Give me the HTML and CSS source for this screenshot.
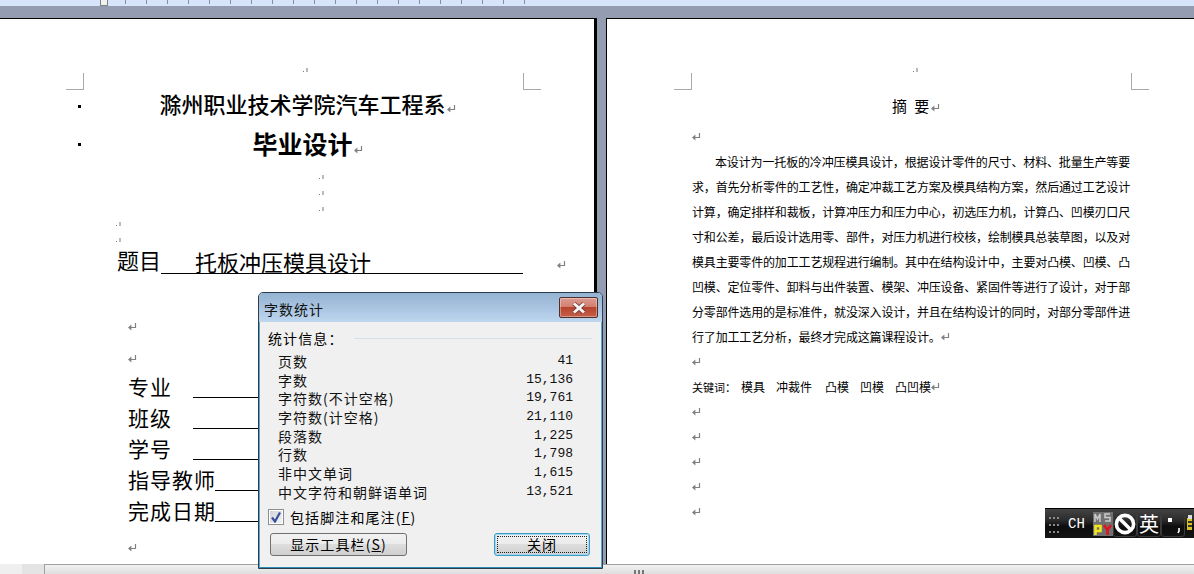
FILE: index.html
```html
<!DOCTYPE html>
<html lang="zh-CN">
<head>
  <meta charset="UTF-8" />
  <title>字数统计</title>
  <link rel="stylesheet" href="styles.css">
</head>
<body>

  <!-- paragraph marks, reused everywhere -->
  <svg class="defs" width="0" height="0">
    <symbol id="pm" viewBox="0 0 9 8"><path d="M7.5 0v4.5H2" fill="none" stroke="#808080" stroke-width="1.2"/><path d="M0 4.5l3.4-3v6z" fill="#808080"/></symbol>
    <symbol id="pm-tiny" viewBox="0 0 5 5"><rect x="0" y="3" width="1" height="1" fill="#777"/><rect x="3.5" y="0" width="1" height="4" fill="#777"/></symbol>
  </svg>

  <!-- Ruler -->
  <div class="ruler">
    <div class="ruler-handle"></div>
    <div class="ruler-ticks"></div>
  </div>

  <!-- Two pages side by side -->
  <div class="workspace">

    <div class="page page-left">
      <i class="crop crop-tl"></i>
      <i class="crop crop-tr"></i>

      <div class="mark-row top-mark"><svg class="pm-tiny"><use href="#pm-tiny"/></svg></div>

      <div class="cover-title">
        <i class="bullet"></i>
        <div class="cover-text school">滁州职业技术学院汽车工程系<svg class="pm"><use href="#pm"/></svg></div>
      </div>
      <div class="cover-title second">
        <i class="bullet"></i>
        <div class="cover-text degree">毕业设计<svg class="pm"><use href="#pm"/></svg></div>
      </div>

      <div class="blank-group center-group">
        <div class="blank"><svg class="pm-tiny"><use href="#pm-tiny"/></svg></div>
        <div class="blank"><svg class="pm-tiny"><use href="#pm-tiny"/></svg></div>
        <div class="blank"><svg class="pm-tiny"><use href="#pm-tiny"/></svg></div>
      </div>
      <div class="blank-group left-group">
        <div class="blank"><svg class="pm-tiny"><use href="#pm-tiny"/></svg></div>
        <div class="blank"><svg class="pm-tiny"><use href="#pm-tiny"/></svg></div>
      </div>

      <div class="topic">
        <span class="topic-label">题目</span>
        <span class="topic-value">托板冲压模具设计</span>
        <svg class="pm"><use href="#pm"/></svg>
      </div>

      <div class="info-mark first"><svg class="pm"><use href="#pm"/></svg></div>
      <div class="info-mark"><svg class="pm"><use href="#pm"/></svg></div>

      <div class="info-row"><span class="info-label">专业</span><span class="info-line"></span></div>
      <div class="info-row"><span class="info-label">班级</span><span class="info-line"></span></div>
      <div class="info-row"><span class="info-label">学号</span><span class="info-line"></span></div>
      <div class="info-row"><span class="info-label wide">指导教师</span><span class="info-line"></span></div>
      <div class="info-row"><span class="info-label wide">完成日期</span><span class="info-line"></span></div>

      <div class="info-mark last"><svg class="pm"><use href="#pm"/></svg></div>
    </div>

    <div class="page page-right">
      <i class="crop crop-tl"></i>
      <i class="crop crop-tr"></i>

      <div class="mark-row top-mark"><svg class="pm-tiny"><use href="#pm-tiny"/></svg></div>

      <div class="abstract-title">摘&nbsp;要<svg class="pm"><use href="#pm"/></svg></div>
      <div class="doc-line"><svg class="pm"><use href="#pm"/></svg></div>

      <div class="body-line indent">本设计为一托板的冷冲压模具设计，根据设计零件的尺寸、材料、批量生产等要</div>
      <div class="body-line">求，首先分析零件的工艺性，确定冲裁工艺方案及模具结构方案，然后通过工艺设计</div>
      <div class="body-line">计算，确定排样和裁板，计算冲压力和压力中心，初选压力机，计算凸、凹模刃口尺</div>
      <div class="body-line">寸和公差，最后设计选用零、部件，对压力机进行校核，绘制模具总装草图，以及对</div>
      <div class="body-line">模具主要零件的加工工艺规程进行编制。其中在结构设计中，主要对凸模、凹模、凸</div>
      <div class="body-line">凹模、定位零件、卸料与出件装置、模架、冲压设备、紧固件等进行了设计，对于部</div>
      <div class="body-line">分零部件选用的是标准件，就没深入设计，并且在结构设计的同时，对部分零部件进</div>
      <div class="doc-line last-line">行了加工工艺分析，最终才完成这篇课程设计。<svg class="pm"><use href="#pm"/></svg></div>

      <div class="doc-line"><svg class="pm"><use href="#pm"/></svg></div>
      <div class="doc-line keywords">
        <span class="kw-label">关键词：</span><span class="kw kw-1">模具</span><span class="kw kw-2">冲裁件</span><span class="kw kw-3">凸模</span><span class="kw kw-3">凹模</span><span class="kw">凸凹模</span><svg class="pm"><use href="#pm"/></svg>
      </div>
      <div class="doc-line"><svg class="pm"><use href="#pm"/></svg></div>
      <div class="doc-line"><svg class="pm"><use href="#pm"/></svg></div>
      <div class="doc-line"><svg class="pm"><use href="#pm"/></svg></div>
      <div class="doc-line"><svg class="pm"><use href="#pm"/></svg></div>
      <div class="doc-line"><svg class="pm"><use href="#pm"/></svg></div>
    </div>
  </div>

  <!-- Bottom scrollbar -->
  <div class="scrollbar">
    <div class="sb-view">
      <svg width="10" height="8" viewBox="0 0 10 8"><rect x="0.5" y="0.5" width="9" height="7" fill="#f4f4f4" stroke="#555"/><path d="M2 2l6 4M8 2l-6 4" stroke="#444"/></svg>
    </div>
    <div class="sb-arrow">
      <svg width="6" height="6" viewBox="0 0 6 6"><path d="M6 0v6H0z" fill="#444"/></svg>
    </div>
    <div class="sb-track"><i class="grip"></i><i class="grip"></i><i class="grip"></i></div>
  </div>

  <!-- Word count dialog -->
  <div class="dialog">
    <div class="dialog-title">
      <span>字数统计</span>
      <div class="close-btn">
        <svg width="16" height="12" viewBox="0 0 16 12"><path d="M3 1.5l10 9M13 1.5l-10 9" stroke="#6d3a36" stroke-width="4.4"/><path d="M3 1.5l10 9M13 1.5l-10 9" stroke="#f6f3f3" stroke-width="3"/></svg>
      </div>
    </div>
    <div class="dialog-body">
      <div class="group-head"><span>统计信息：</span><i class="group-rule"></i></div>
      <ul class="stats">
        <li><span>页数</span><b>41</b></li>
        <li><span>字数</span><b>15,136</b></li>
        <li><span>字符数(不计空格)</span><b>19,761</b></li>
        <li><span>字符数(计空格)</span><b>21,110</b></li>
        <li><span>段落数</span><b>1,225</b></li>
        <li><span>行数</span><b>1,798</b></li>
        <li><span>非中文单词</span><b>1,615</b></li>
        <li><span>中文字符和朝鲜语单词</span><b>13,521</b></li>
      </ul>
      <div class="check-row">
        <span class="checkbox">
          <svg width="12" height="12" viewBox="0 0 12 12"><path d="M2 6.5l3 4 5-9" fill="none" stroke="#3a4f9a" stroke-width="2.2"/></svg>
        </span>
        <span>包括脚注和尾注(<u>F</u>)</span>
      </div>
      <div class="btn-row">
        <div class="btn">显示工具栏(<u>S</u>)</div>
        <div class="btn btn-default"><span class="focus-box">关闭</span></div>
      </div>
    </div>
  </div>

  <!-- Floating IME bar -->
  <div class="ime-bar">
    <div class="ime-grip">
      <svg width="11" height="17" viewBox="0 0 11 17"><path d="M0 1h11M0 8h11M0 15h11" stroke="#8a8a8a" stroke-width="2" stroke-dasharray="2 2"/></svg>
    </div>
    <span class="ime-lang">CH</span>
    <div class="ime-py">
      <svg width="20" height="24" viewBox="0 0 20 24"><rect width="20" height="24" fill="#707070"/><path d="M2 10V2l2.500 5L7 2v8M17 2h-5v3.500h5V9h-5" fill="none" stroke="#ccc" stroke-width="1.5"/><path d="M2.500 23v-9h5v5h-5" fill="none" stroke="#f2e51c" stroke-width="2.6"/><path d="M11 13l3.500 5 3.500-5M14.500 18v5" fill="none" stroke="#e0141c" stroke-width="2.6"/></svg>
    </div>
    <div class="ime-key">
      <svg width="22" height="22" viewBox="0 0 22 22"><circle cx="11" cy="11" r="8.6" fill="none" stroke="#fff" stroke-width="3.6"/><path d="M6 6l10 10" stroke="#fff" stroke-width="3.6"/></svg>
    </div>
    <div class="ime-key ime-char">英</div>
    <div class="ime-key ime-punct">
      <svg width="22" height="22" viewBox="0 0 22 22"><rect x="6" y="5" width="4" height="4" fill="#fff"/><path d="M17 15v3l-1 2" fill="none" stroke="#fff" stroke-width="1.6"/></svg>
    </div>
    <div class="ime-end">
      <svg width="5" height="22" viewBox="0 0 5 22"><rect y="5" width="5" height="12" fill="#d9c41e"/><rect x="1" y="2" width="4" height="4" fill="#ddd"/><rect x="1" y="8" width="4" height="2" fill="#333"/><rect x="1" y="12" width="4" height="2" fill="#333"/></svg>
    </div>
  </div>

</body>
</html>
```

FILE: styles.css
```css
* {
  box-sizing: border-box;
  margin: 0;
  padding: 0;
}

html, body {
  width: 1194px;
  height: 574px;
  overflow: hidden;
}

body {
  position: relative;
  display: flex;
  flex-direction: column;
  background: #939cb0;
  font-family: "Noto Sans CJK SC", "Liberation Sans", sans-serif;
  color: #000;
}

.defs {
  position: absolute;
}

/* ruler */
.ruler {
  height: 6px;
  display: flex;
  padding-left: 100px;
  background: #d6e5fb;
}

.ruler-handle {
  width: 8px;
  height: 6px;
  background: #f2f2f2;
  border: 1px solid #7f7f7f;
  border-top: none;
}

.ruler-ticks {
  width: 400px;
  height: 4px;
  margin-left: 17px;
  background: repeating-linear-gradient(to right, #8a8f99 0, #8a8f99 1px, transparent 1px, transparent 21px);
}

/* pages */
.workspace {
  flex: 1;
  display: flex;
  padding-top: 12px;
  min-height: 0;
}

.page {
  position: relative;
  height: 546px;
  background: #fff;
  border-top: 1px solid #000;
}

.page-left {
  width: 597px;
  border-right: 3px solid #000;
}

.page-right {
  width: 588px;
  flex: none;
  margin-left: 9px;
  border-left: 1px solid #000;
  padding-left: 85px;
}

.crop {
  position: absolute;
  top: 54px;
  width: 18px;
  height: 17px;
  border-bottom: 1px solid #a8a8a8;
}

.crop-tl { border-right: 1px solid #a8a8a8; }
.crop-tr { border-left: 1px solid #a8a8a8; }

.page-left .crop-tl { left: 66px; }
.page-left .crop-tr { left: 523px; }
.page-right .crop-tl { left: 67px; }
.page-right .crop-tr { left: 524px; }

/* paragraph marks */
.pm {
  display: inline-block;
  width: 9px;
  height: 8px;
  margin-left: 1px;
  vertical-align: 0;
}

.pm-tiny {
  display: block;
  width: 5px;
  height: 5px;
}

.top-mark {
  height: 5px;
  margin-top: 49px;
}

.page-left .top-mark { padding-left: 303px; }
.page-right .top-mark { padding-left: 221px; }

/* cover */
.cover-title {
  display: flex;
  align-items: center;
  height: 38px;
  margin-top: 14px;
  padding: 0 60px 0 78px;
}

.cover-title.second {
  margin-top: 0;
}

.bullet {
  width: 3px;
  height: 3px;
  background: #000;
}

.cover-text {
  flex: 1;
  text-align: center;
  white-space: nowrap;
}

.school {
  padding-bottom: 5px;
  font-size: 22px;
  font-weight: 500;
  line-height: 33px;
}

.degree {
  padding-bottom: 2px;
  font-size: 25px;
  font-weight: 700;
  line-height: 34px;
}

.blank-group .blank {
  height: 16px;
  padding-top: 5px;
}

.center-group {
  margin-top: 7px;
  padding-left: 319px;
}

.left-group {
  padding-left: 116px;
  margin-top: -1px;
}

.topic {
  display: flex;
  align-items: flex-end;
  height: 32px;
  margin-top: -7px;
  padding-left: 117px;
  font-size: 22px;
  line-height: 30px;
}

.topic-label {
  width: 44px;
}

.topic-value {
  width: 362px;
  height: 28px;
  line-height: 30px;
  padding-left: 34px;
  border-bottom: 1px solid #000;
}

.topic .pm {
  margin: 0 0 5px 34px;
}

.info-mark {
  height: 32px;
  padding: 12px 0 0 127px;
  line-height: 8px;
}

.info-mark.first {
  margin-top: 34px;
}

.info-mark.last {
  margin-top: 2px;
}

.info-row {
  display: flex;
  height: 31px;
  padding-left: 128px;
  font-size: 21px;
  line-height: 28px;
}

.info-label {
  width: 65px;
  letter-spacing: 1px;
  white-space: nowrap;
}

.info-label.wide {
  width: 87px;
}

.info-line {
  width: 70px;
  height: 26px;
  border-bottom: 1px solid #000;
}

/* abstract page */
.abstract-title {
  width: 450px;
  padding-left: 200px;
  margin-top: 20px;
  height: 25px;
  line-height: 25px;
  font-size: 15px;
  letter-spacing: 2px;
  white-space: nowrap;
}

.abstract-title .pm {
  margin-left: 0;
}

.doc-line {
  height: 25px;
  line-height: 25px;
  font-size: 12px;
  white-space: nowrap;
}

.doc-line .pm {
  margin-left: 0;
  vertical-align: 1px;
}

.abstract-title + .doc-line {
  margin-top: 6px;
}

.body-line {
  width: 438px;
  height: 25px;
  line-height: 25px;
  font-size: 12px;
  letter-spacing: -0.17px;
  white-space: nowrap;
  text-align: justify;
  text-align-last: justify;
}

.body-line.indent {
  margin-left: 23px;
  width: 415px;
}

.last-line {
  letter-spacing: -0.16px;
}

.kw-label { font-size: 11px; margin-right: 5px; }
.kw { display: inline-block; }
.kw-1 { width: 35px; }
.kw-2 { width: 49px; }
.kw-3 { width: 35px; }

/* bottom scrollbar */
.scrollbar {
  height: 10px;
  display: flex;
  background: #e6e6e6;
  position: absolute;
  left: 0;
  top: 564px;
  width: 1194px;
}

.sb-view {
  width: 22px;
  padding: 3px 0 0 6px;
  background: #efefef;
}

.sb-arrow {
  width: 22px;
  padding: 3px 0 0 7px;
  background: #e4e4e4;
}

.sb-track {
  flex: 1;
  display: flex;
  gap: 2px;
  padding: 5px 0 0 589px;
  border-top: 1px solid #a0a0a0;
  border-left: 1px solid #a0a0a0;
  background: linear-gradient(#f2f2f2, #dedede);
}

.grip {
  width: 2px;
  height: 5px;
  background: #777;
}

/* dialog */
.dialog {
  position: absolute;
  left: 258px;
  top: 292px;
  width: 345px;
  height: 277px;
  border: 1px solid #2d3d4d;
  border-radius: 5px 5px 0 0;
  background: #f0f0f0;
  font-size: 14px;
  overflow: hidden;
}

.dialog-title {
  height: 29px;
  display: flex;
  justify-content: space-between;
  padding: 4px 4px 0 5px;
  background: linear-gradient(#94b2d2, #bed6ef);
  line-height: 24px;
  color: #111;
  letter-spacing: 1px;
}

.close-btn {
  width: 39px;
  height: 21px;
  display: flex;
  align-items: center;
  justify-content: center;
  border: 1px solid #4d2f2c;
  border-radius: 2px;
  background: linear-gradient(#dc9b90 0, #d2806f 45%, #b8432d 50%, #c4604a 100%);
  box-shadow: inset 0 0 0 1px rgba(255, 255, 255, 0.35);
}

.dialog-body {
  height: 247px;
  padding: 6px 9px 0 8px;
  border-left: 1px solid #5aa5c8;
  border-right: 1px solid #5aa5c8;
  border-bottom: 2px solid #2c8cb3;
}

.group-head {
  display: flex;
  align-items: center;
  height: 20px;
  letter-spacing: 1.1px;
}

.group-rule {
  flex: 1;
  height: 1px;
  margin-left: 10px;
  background: #d5dfe7;
}

.stats {
  list-style: none;
  margin-top: 4px;
  padding: 0 19px 0 10px;
}

.stats li {
  display: flex;
  justify-content: space-between;
  height: 18.7px;
  line-height: 18.7px;
  letter-spacing: 1px;
  color: #111;
}

.stats b {
  font-family: "Liberation Mono", monospace;
  font-size: 13px;
  font-weight: normal;
  letter-spacing: 0;
}

.check-row {
  display: flex;
  align-items: center;
  height: 20px;
  margin-top: 5px;
  letter-spacing: 1.1px;
  gap: 6px;
}

.checkbox {
  width: 16px;
  height: 16px;
  display: flex;
  align-items: center;
  justify-content: center;
  border: 1px solid #8e8f8f;
  background: linear-gradient(135deg, #cfd1d6, #f4f5f7);
  box-shadow: inset 0 0 0 1px #fff;
}

.btn-row {
  display: flex;
  justify-content: space-between;
  margin-top: 6px;
  padding: 0 2px 0 2px;
}

.btn {
  width: 137px;
  height: 23px;
  text-align: center;
  line-height: 21px;
  border: 1px solid #707070;
  border-radius: 3px;
  background: linear-gradient(#f2f2f2 0, #ebebeb 48%, #dddddd 50%, #cfcfcf 100%);
  letter-spacing: 1.1px;
}

.btn-default {
  width: 96px;
  padding: 2px;
  border-color: #3c9bc4;
  box-shadow: inset 0 0 0 1px #a3d9f2;
  line-height: 15px;
}

.focus-box {
  display: block;
  height: 17px;
  border: 1px dotted #222;
}

/* ime bar */
.ime-bar {
  position: absolute;
  left: 1045px;
  top: 508px;
  width: 149px;
  height: 30px;
  display: flex;
  align-items: center;
  border-top: 1px solid #000;
  background: linear-gradient(#444 0, #2a2a2a 40%, #0d0d0d 60%, #141414 100%);
  overflow: hidden;
  color: #fff;
}

.ime-grip {
  width: 11px;
  height: 17px;
  margin-left: 4px;
}

.ime-lang {
  width: 32px;
  padding-left: 8px;
  font-family: "Liberation Mono", monospace;
  font-size: 14px;
}

.ime-py {
  width: 20px;
  height: 24px;
  margin-left: 1px;
}

.ime-key {
  width: 24px;
  height: 27px;
  display: flex;
  align-items: center;
  justify-content: center;
  border: 1px solid #3a3a3a;
  border-radius: 3px;
  flex: none;
}

.ime-char {
  font-size: 20px;
  line-height: 24px;
}

.ime-end {
  width: 5px;
  height: 22px;
  margin-left: 2px;
  flex: none;
}
```
